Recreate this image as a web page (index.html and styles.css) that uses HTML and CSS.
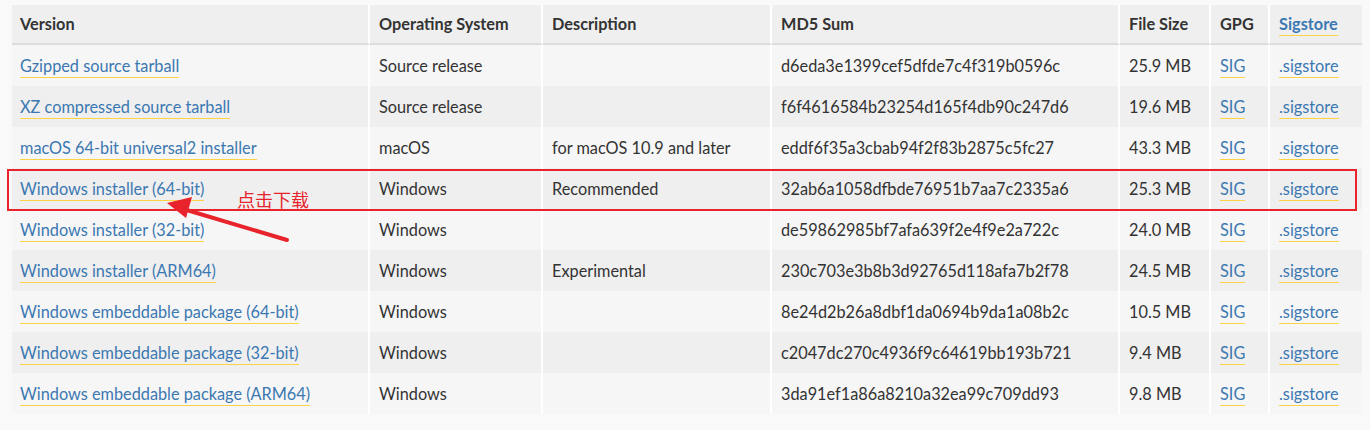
FILE: index.html
```html
<!DOCTYPE html>
<html lang="en">
<head>
<meta charset="utf-8">
<title>Files</title>
<link rel="stylesheet" href="styles.css">
</head>
<body>
<div class="wrap">
<table class="files">
<colgroup>
<col class="c-ver"><col class="c-os"><col class="c-desc"><col class="c-md5"><col class="c-size"><col class="c-gpg"><col class="c-sig">
</colgroup>
<thead>
<tr><th>Version</th><th>Operating System</th><th>Description</th><th>MD5 Sum</th><th>File Size</th><th>GPG</th><th><a href="#">Sigstore</a></th></tr>
</thead>
<tbody>
<tr><td><a href="#">Gzipped source tarball</a></td><td>Source release</td><td></td><td>d6eda3e1399cef5dfde7c4f319b0596c</td><td>25.9 MB</td><td><a href="#">SIG</a></td><td><a href="#">.sigstore</a></td></tr>
<tr><td><a href="#">XZ compressed source tarball</a></td><td>Source release</td><td></td><td>f6f4616584b23254d165f4db90c247d6</td><td>19.6 MB</td><td><a href="#">SIG</a></td><td><a href="#">.sigstore</a></td></tr>
<tr><td><a href="#">macOS 64-bit universal2 installer</a></td><td>macOS</td><td>for macOS 10.9 and later</td><td>eddf6f35a3cbab94f2f83b2875c5fc27</td><td>43.3 MB</td><td><a href="#">SIG</a></td><td><a href="#">.sigstore</a></td></tr>
<tr><td><a href="#">Windows installer (64-bit)</a></td><td>Windows</td><td>Recommended</td><td>32ab6a1058dfbde76951b7aa7c2335a6</td><td>25.3 MB</td><td><a href="#">SIG</a></td><td><a href="#">.sigstore</a></td></tr>
<tr><td><a href="#">Windows installer (32-bit)</a></td><td>Windows</td><td></td><td>de59862985bf7afa639f2e4f9e2a722c</td><td>24.0 MB</td><td><a href="#">SIG</a></td><td><a href="#">.sigstore</a></td></tr>
<tr><td><a href="#">Windows installer (ARM64)</a></td><td>Windows</td><td>Experimental</td><td>230c703e3b8b3d92765d118afa7b2f78</td><td>24.5 MB</td><td><a href="#">SIG</a></td><td><a href="#">.sigstore</a></td></tr>
<tr><td><a href="#">Windows embeddable package (64-bit)</a></td><td>Windows</td><td></td><td>8e24d2b26a8dbf1da0694b9da1a08b2c</td><td>10.5 MB</td><td><a href="#">SIG</a></td><td><a href="#">.sigstore</a></td></tr>
<tr><td><a href="#">Windows embeddable package (32-bit)</a></td><td>Windows</td><td></td><td>c2047dc270c4936f9c64619bb193b721</td><td>9.4 MB</td><td><a href="#">SIG</a></td><td><a href="#">.sigstore</a></td></tr>
<tr><td><a href="#">Windows embeddable package (ARM64)</a></td><td>Windows</td><td></td><td>3da91ef1a86a8210a32ea99c709dd93</td><td>9.8 MB</td><td><a href="#">SIG</a></td><td><a href="#">.sigstore</a></td></tr>
</tbody>
</table>
<div class="highlight"></div>
<svg class="arrow" width="140" height="60" viewBox="0 0 140 60">
  <line x1="127" y1="50" x2="20" y2="18" stroke="#e8232b" stroke-width="4" stroke-linecap="round"/>
  <polygon points="7,13 32,7 26,28" fill="#e8232b"/>
</svg>
<div class="note">点击下载</div>
</div>
</body>
</html>
```
FILE: styles.css
```css
html, body {
  margin: 0;
  padding: 0;
  background: #f9f9f9;
}
body {
  font-family: Lato, "Noto Sans", sans-serif;
  font-size: 16.3px;
  color: #333;
}
.wrap {
  position: relative;
  padding: 5px 8px 0 12px;
}
.files {
  width: 1350px;
  table-layout: fixed;
  border-collapse: separate;
  border-spacing: 0;
}
.c-ver { width: 358px; }
.c-os { width: 173px; }
.c-desc { width: 229px; }
.c-md5 { width: 348px; }
.c-size { width: 91px; }
.c-gpg { width: 59px; }
.c-sig { width: 92px; }
.files th, .files td {
  box-sizing: border-box;
  height: 41px;
  padding: 0 0 0 8px;
  text-align: left;
  white-space: nowrap;
  border-right: 2px solid #fff;
}
.files th:last-child, .files td:last-child { border-right: none; }
.files th + th, .files td + td { padding-left: 9px; }
.files th {
  background: #efefef;
  font-weight: bold;
  border-bottom: 2px solid #dddddd;
  height: 40px;
  padding-bottom: 2px;
}
.files tbody tr:nth-child(odd) td { background: #f6f6f6; }
.files tbody tr:nth-child(even) td { background: #efefef; }
.files a {
  color: #3b78b2;
  text-decoration: none;
  border-bottom: 1px solid #ffd343;
  padding-bottom: 2px;
}
.highlight {
  position: absolute;
  left: 7px;
  top: 169px;
  width: 1346px;
  height: 38px;
  border: 2px solid #e8232b;
}
.arrow {
  position: absolute;
  left: 160px;
  top: 190px;
}
.note {
  position: absolute;
  left: 237px;
  top: 186px;
  font-family: "Noto Sans CJK SC", sans-serif;
  font-size: 18px;
  color: #e8232b;
  line-height: 26px;
}
```
